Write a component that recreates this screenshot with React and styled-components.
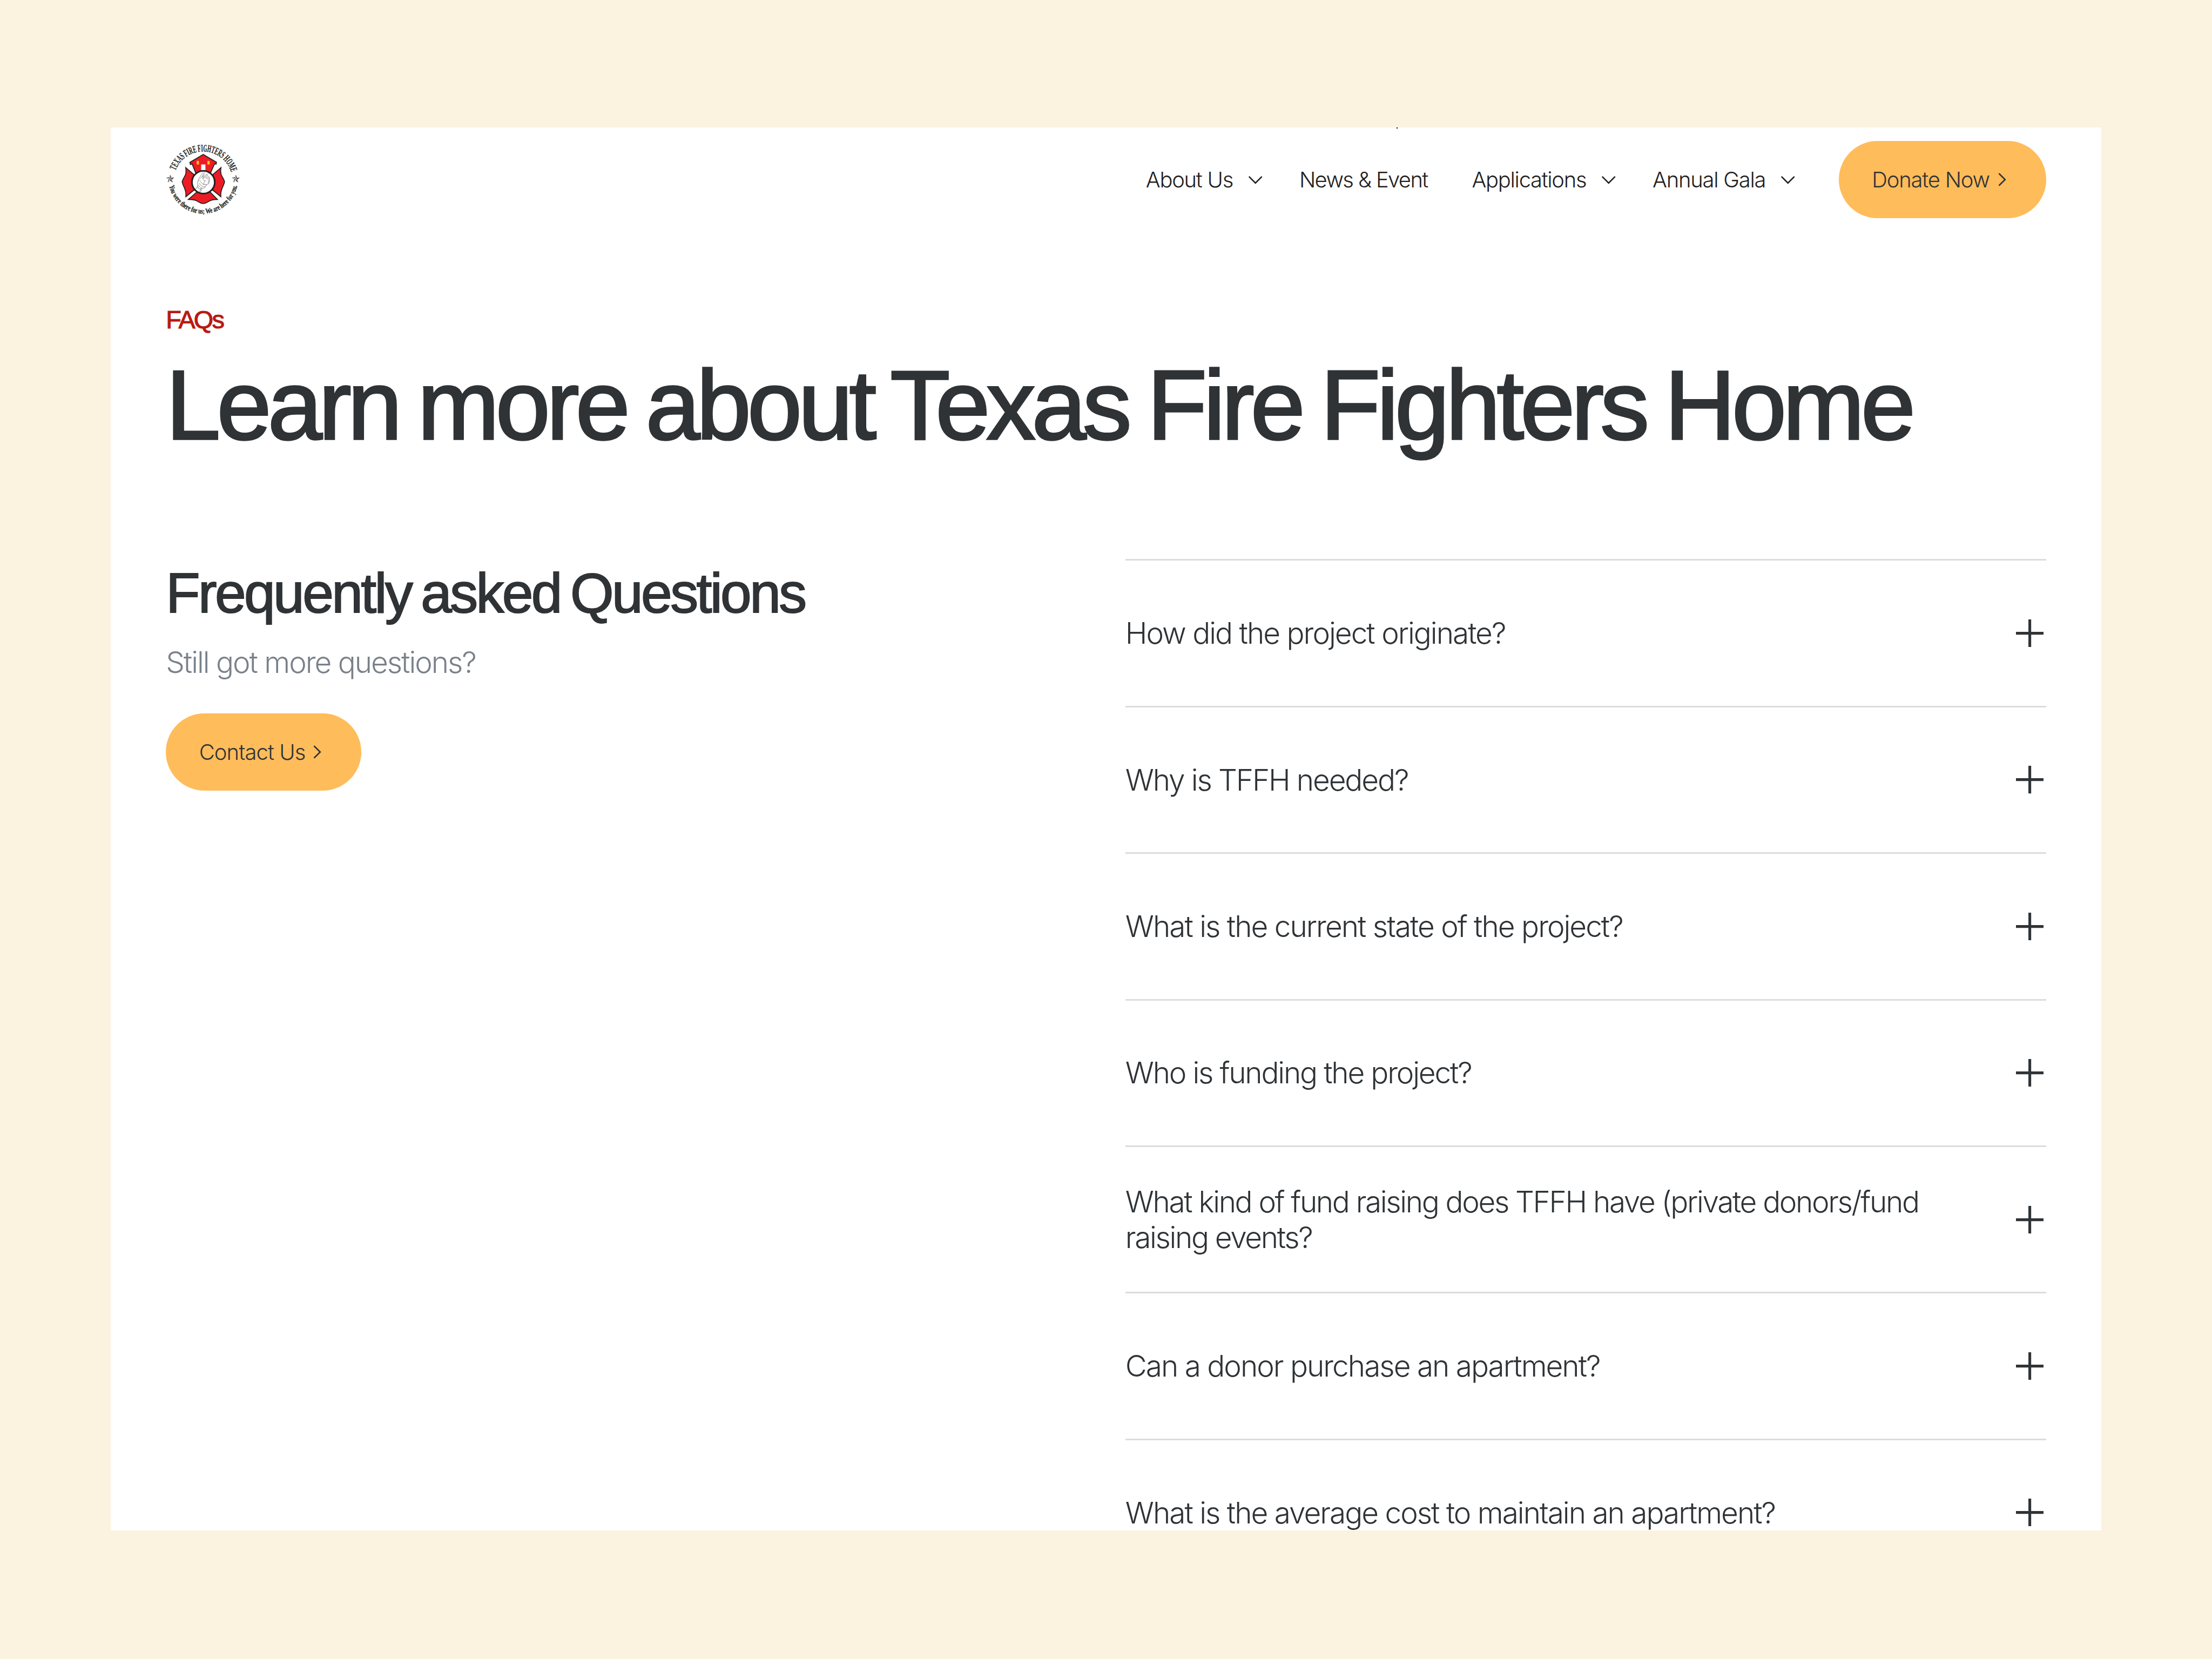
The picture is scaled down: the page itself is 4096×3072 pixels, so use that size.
import React, { useState } from 'react';
import styled, { createGlobalStyle } from 'styled-components';

const navList = [
   { name: 'About Us', sub: true, spacing: -0.0311 },
   { name: 'News & Event', sub: false, spacing: -0.0402 },
   { name: 'Applications', sub: true, spacing: -0.0323 },
   { name: 'Annual Gala', sub: true, spacing: -0.0311 },
];

const faqList = [
   { title: 'How did the project originate?' },
   { title: 'Why is TFFH needed?', spacing: -0.039 },
   { title: 'What is the current state of the project?' },
   { title: 'Who is funding the project?', spacing: -0.04 },
   { title: 'What kind of fund raising does TFFH have (private donors/fund raising events?', spacing: -0.0427 },
   { title: 'Can a donor purchase an apartment?' },
   { title: 'What is the average cost to maintain an apartment?' },
];

const Star = ({ x, y }) => (
   <g transform={`translate(${x} ${y})`} stroke="#231f20" strokeWidth="2" strokeLinejoin="round">
      <path
         fill="#fff"
         d="M0 -31 L8 -9 L32 -8 L13 7 L20 31 L0 17 L-20 31 L-13 7 L-32 -8 L-8 -9 Z"
      />
      <path
         fill="#231f20"
         stroke="none"
         d="M0 -31 L8 -9 L0 0 Z M32 -8 L13 7 L0 0 Z M20 31 L0 17 L0 0 Z M-20 31 L-13 7 L0 0 Z M-32 -8 L-8 -9 L0 0 Z"
      />
   </g>
);

const Logo = () => (
   <LogoSvg viewBox="60 54 672 672">
      <defs>
         <path id="logoTop" d="M145 312 A254 254 0 0 1 625 321" />
         <path id="logoBottom" d="M90 444 A301 301 0 0 0 683 427" />
      </defs>
      <LogoText fontSize="88">
         <textPath href="#logoTop" textLength="634" lengthAdjust="spacingAndGlyphs">
            TEXAS FIRE FIGHTERS HOME
         </textPath>
      </LogoText>
      <LogoText fontSize="66">
         <textPath href="#logoBottom" textLength="826" lengthAdjust="spacingAndGlyphs">
            You were there for us; We are here for you.
         </textPath>
      </LogoText>
      <Star x={99} y={381} />
      <Star x={668} y={381} />
      <g fill="#ed1c24" stroke="#231f20" strokeWidth="8" strokeLinejoin="miter">
         <path d="M385 171 L500 239 L496 256 L484 251 L449 330 L319 330 L288 252 L274 259 L269 240 Z" />
         <path d="M233 285 L302 344 L310 476 L234 538 Q239 500 222 462 Q208 432 202 410 Q205 392 222 365 Q242 335 233 285 Z" />
         <path d="M539 285 L470 344 L462 476 L538 538 Q533 500 550 462 Q564 432 570 410 Q567 392 550 365 Q530 335 539 285 Z" />
         <path d="M328 499 L256 562 Q318 562 342 582 Q384 612 428 582 Q454 562 508 562 L446 499 Z" />
      </g>
      <rect x="328" y="227" width="20" height="31" fill="#ffcb05" />
      <rect x="421" y="227" width="20" height="31" fill="#ffcb05" />
      <rect x="367" y="258" width="37" height="50" fill="#fff" />
      <circle cx="386" cy="412" r="99" fill="#fff" stroke="#231f20" strokeWidth="14" />
      <g fill="none" stroke="#231f20" strokeWidth="2.4" strokeLinecap="round" strokeLinejoin="round">
         <path d="M388 320 C372 345 356 362 344 388 C334 408 334 440 340 462" />
         <path d="M402 320 C392 336 384 346 378 362 L358 378" />
         <path d="M434 332 L412 350" />
         <path d="M318 474 L336 448 M352 496 L366 468 M360 498 L372 474" />
         <path d="M378 362 C384 350 396 346 408 352 L416 348 L424 358 C434 360 440 370 438 382 C444 398 440 414 430 426" />
         <path d="M382 378 C398 368 414 374 424 384 C432 394 436 404 428 418 M384 366 C400 358 418 362 436 380" />
         <path d="M384 362 L382 384 C388 398 396 400 404 396 C396 410 386 420 390 430 C404 436 420 430 430 426" />
         <path d="M340 462 C352 472 366 474 376 464 C390 466 398 462 400 452 C412 448 414 440 410 432" />
         <path d="M344 436 C350 452 362 460 376 464 M352 422 C360 440 380 452 400 452 M364 410 C372 424 382 432 392 432" />
         <path d="M346 400 L350 392 M356 404 L362 400" />
      </g>
   </LogoSvg>
);

const ChevronDown = () => (
   <NavArrow viewBox="0 0 32 16">
      <path d="M11.9 6.1 L16.3 10.5 L20.7 6.1" />
   </NavArrow>
);

const PillButton = ({ children, $width, $spacing }) => (
   <Pill $width={$width} $spacing={$spacing}>
      {children}
      <PillArrow viewBox="0 0 16 16">
         <path d="M6.3 3.9 L10.5 8 L6.3 12.1" />
      </PillArrow>
   </Pill>
);

const App = () => {
   const [openIdx, setOpenIdx] = useState(null);

   const handleClickQuestion = idx => {
      setOpenIdx(openIdx === idx ? null : idx);
   };

   return (
      <>
         <GlobalStyle />
         <Background>
            <Window>
               <Notch />
               <Header>
                  <Logo />
                  <Nav>
                     {navList.map(item => (
                        <NavItem key={item.name} $spacing={item.spacing}>
                           <span>{item.name}</span>
                           {item.sub && <ChevronDown />}
                        </NavItem>
                     ))}
                     <PillButton $width="15rem" $spacing={-0.0298}>
                        Donate Now
                     </PillButton>
                  </Nav>
               </Header>
               <Title>
                  <label>FAQs</label>
                  <h1>Learn more about Texas Fire Fighters Home</h1>
               </Title>
               <Contents>
                  <Intro>
                     <h2>Frequently asked Questions</h2>
                     <p>Still got more questions?</p>
                     <PillButton $width="14.125rem" $spacing={-0.0224}>
                        Contact Us
                     </PillButton>
                  </Intro>
                  <FaqList>
                     {faqList.map((faq, idx) => (
                        <FaqRow key={faq.title} onClick={() => handleClickQuestion(idx)}>
                           <Question $spacing={faq.spacing}>{faq.title}</Question>
                           <PlusIcon viewBox="0 0 20 20">
                              <path d={openIdx === idx ? 'M0 10 H20' : 'M10 0 V20 M0 10 H20'} />
                           </PlusIcon>
                        </FaqRow>
                     ))}
                  </FaqList>
               </Contents>
            </Window>
         </Background>
      </>
   );
};

// 1rem = 10 units of the 1600 x 1200 layout
const GlobalStyle = createGlobalStyle`
   html {
      font-size: 25.6px;
   }
   body {
      margin: 0;
      font-family: 'Inter', 'Liberation Sans', sans-serif;
      font-weight: 300;
      color: #2f3336;
   }
   * {
      box-sizing: border-box;
   }
   h1, h2, p {
      margin: 0;
      font-weight: inherit;
   }
`;
const Background = styled.div`
   width: 160rem;
   height: 120rem;
   padding: 9.2rem 8rem 9.3rem;
   background-color: #fbf2df;
   overflow: hidden;
`;
const Window = styled.div`
   position: relative;
   height: 101.5rem;
   padding: 1rem 4rem 0;
   background-color: #fff;
   overflow: hidden;
`;
// stray pixel of the browser frame over the top edge
const Notch = styled.i`
   position: absolute;
   top: 0;
   left: 93rem;
   width: 0.1rem;
   height: 0.1rem;
   background-color: #000;
`;
const Header = styled.header`
   display: flex;
   align-items: center;
   justify-content: space-between;
   height: 5.6rem;
`;
const LogoSvg = styled.svg`
   width: 5.6rem;
   height: 5.6rem;
`;
const LogoText = styled.text`
   font-family: 'Liberation Serif', serif;
   font-weight: bold;
   fill: #231f20;
   stroke: #231f20;
   stroke-width: 1.2;
`;
const Nav = styled.nav`
   display: flex;
   align-items: center;
   color: #1f2020;
   > :last-child {
      margin-left: 3.7rem;
   }
`;
const NavItem = styled.div`
   display: flex;
   align-items: center;
   margin-left: 3.2rem;
   font-size: 1.56rem;
   line-height: 2.4rem;
   letter-spacing: ${p => p.$spacing}em;
   white-space: nowrap;
`;
const NavArrow = styled.svg`
   width: 3.2rem;
   height: 1.6rem;
   margin-right: -1.6rem;
   fill: none;
   stroke: currentColor;
   stroke-width: 1;
   stroke-linecap: round;
`;
const Pill = styled.button`
   display: flex;
   align-items: center;
   justify-content: space-between;
   width: ${p => p.$width};
   height: 5.6rem;
   padding: 0 2.4rem;
   border: 0;
   border-radius: 2.8rem;
   background-color: #ffbc5a;
   color: #2f3336;
   font-family: inherit;
   font-weight: inherit;
   font-size: 1.56rem;
   letter-spacing: ${p => p.$spacing}em;
   white-space: nowrap;
   cursor: pointer;
`;
const PillArrow = styled.svg`
   flex: none;
   width: 1.6rem;
   height: 1.6rem;
   fill: none;
   stroke: currentColor;
   stroke-width: 1;
   stroke-linecap: round;
`;
const Title = styled.div`
   display: flex;
   flex-direction: column;
   margin-top: 6.17rem;
   font-family: 'Liberation Sans', sans-serif;
   font-weight: 400;
   white-space: nowrap;
   > label {
      font-size: 1.83rem;
      line-height: 2.4rem;
      letter-spacing: -0.06em;
      color: #b81a12;
      -webkit-text-stroke: 0.024em #b81a12;
   }
   > h1 {
      margin-top: 0.74rem;
      font-size: 7.1rem;
      line-height: 8.4rem;
      letter-spacing: -0.0375em;
      word-spacing: -0.046em;
      -webkit-text-stroke: 0.019em #2f3336;
   }
`;
const Contents = styled.div`
   display: grid;
   grid-template-columns: 1fr 66.6rem;
   margin-top: 6.94rem;
`;
const Intro = styled.div`
   > h2 {
      margin-top: 0.04rem;
      font-family: 'Liberation Sans', sans-serif;
      font-weight: 400;
      font-size: 4.05rem;
      line-height: 4.8rem;
      letter-spacing: -0.0345em;
      word-spacing: -0.07em;
      -webkit-text-stroke: 0.019em #2f3336;
   }
   > p {
      margin: 1.32rem 0 2.38rem;
      font-size: 2.145rem;
      line-height: 2.6rem;
      letter-spacing: -0.037em;
      color: #79818a;
   }
`;
const FaqList = styled.div`
   border-top: 0.12rem solid #dbdcdc;
`;
const FaqRow = styled.div`
   display: flex;
   align-items: center;
   justify-content: space-between;
   height: 10.6rem;
   padding-right: 0.2rem;
   border-bottom: 0.12rem solid #dbdcdc;
   cursor: pointer;
`;
const Question = styled.div`
   width: 59rem;
   font-size: 2.145rem;
   line-height: 2.6rem;
   letter-spacing: ${p => p.$spacing || -0.0365}em;
`;
const PlusIcon = styled.svg`
   flex: none;
   width: 2rem;
   height: 2rem;
   stroke: currentColor;
   stroke-width: 2;
`;
export default App;
